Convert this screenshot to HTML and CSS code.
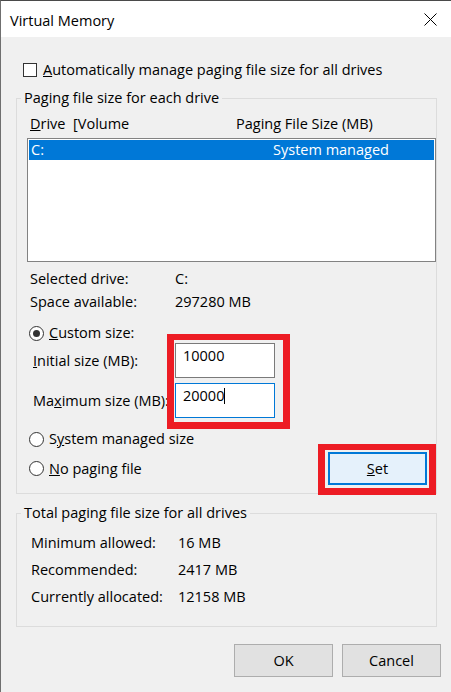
FILE: index.html
```html
<!DOCTYPE html>
<html lang="en">
<head>
  <meta charset="UTF-8" />
  <title>Virtual Memory</title>
  <link rel="stylesheet" href="styles.css">
</head>
<body>
  <div class="janela">
    <div class="titulo">
      <span class="titulo-texto">Virtual Memory</span>
      <svg class="fechar" width="13" height="13" viewBox="0 0 13 13">
        <path d="M0.5 0.5 L12.5 12.5 M12.5 0.5 L0.5 12.5" stroke="#000" stroke-width="1" fill="none" />
      </svg>
    </div>

    <div class="linha-check">
      <span class="checkbox"></span>
      <span><u>A</u>utomatically manage paging file size for all drives</span>
    </div>

    <div class="grupo grupo-drives">
      <div class="legenda">Paging file size for each drive</div>

      <div class="lista-cabecalho">
        <span class="col-drive"><u>D</u>rive&nbsp;&nbsp;[Volume</span>
        <span>Paging File Size (MB)</span>
      </div>

      <div class="lista">
        <div class="lista-linha selecionada">
          <span class="col-drive">C:</span>
          <span>System managed</span>
        </div>
      </div>

      <div class="info">
        <div class="info-linha"><span class="info-rotulo">Selected drive:</span><span>C:</span></div>
        <div class="info-linha"><span class="info-rotulo">Space available:</span><span>297280 MB</span></div>
      </div>

      <div class="linha-radio radio-custom">
        <span class="radio marcado"></span>
        <span><u>C</u>ustom size:</span>
      </div>

      <div class="tamanhos">
        <span class="tamanho-rotulo"><u>I</u>nitial size (MB):</span>
        <div class="campo">10000</div>
        <span class="tamanho-rotulo">Ma<u>x</u>imum size (MB):</span>
        <div class="campo foco">20000<span class="cursor"></span></div>
      </div>

      <div class="linha-radio radio-sistema">
        <span class="radio"></span>
        <span>S<u>y</u>stem managed size</span>
      </div>

      <div class="linha-final">
        <div class="linha-radio">
          <span class="radio"></span>
          <span><u>N</u>o paging file</span>
        </div>
        <button class="botao botao-set"><u>S</u>et</button>
      </div>
    </div>

    <div class="grupo grupo-total">
      <div class="legenda">Total paging file size for all drives</div>
      <div class="total-linha"><span class="total-rotulo">Minimum allowed:</span><span>16 MB</span></div>
      <div class="total-linha"><span class="total-rotulo">Recommended:</span><span>2417 MB</span></div>
      <div class="total-linha"><span class="total-rotulo">Currently allocated:</span><span>12158 MB</span></div>
    </div>

    <div class="acoes">
      <button class="botao">OK</button>
      <button class="botao">Cancel</button>
    </div>

    <div class="destaque destaque-tamanhos"></div>
    <div class="destaque destaque-set"></div>
  </div>
</body>
</html>
```

FILE: styles.css
```css
body {
  margin: 0;
  background: #f0f0f0;
  color: #000;
  font-family: 'Open Sans', sans-serif;
  font-size: 14.5px;
  line-height: 20px;
}

.janela {
  position: relative;
  width: 451px;
  height: 692px;
  box-sizing: border-box;
  border-left: 1px solid #6f6f6f;
  border-top: 1px solid #4a4a4a;
  background: #f0f0f0;
  overflow: hidden;
}

.titulo {
  height: 36px;
  background: #ffffff;
  display: flex;
  justify-content: space-between;
  align-items: flex-start;
}

.titulo-texto {
  padding: 10px 0 0 9px;
}

.fechar {
  margin: 12px 14px 0 0;
}

.linha-check {
  display: flex;
  align-items: center;
  gap: 6px;
  margin-top: 23px;
  padding-left: 22px;
}

.checkbox {
  width: 12px;
  height: 12px;
  border: 1px solid #333;
  background: #fff;
}

.grupo {
  margin-left: 15px;
  width: 421px;
  box-sizing: border-box;
  border: 1px solid #dcdcdc;
}

.grupo-drives {
  margin-top: 18px;
  padding-bottom: 8px;
}

.legenda {
  width: max-content;
  height: 20px;
  margin: -11px 0 0 4px;
  padding: 0 3px;
  background: #f0f0f0;
}

.lista-cabecalho {
  display: flex;
  margin-top: 6px;
  padding-left: 13px;
}

.lista-cabecalho .col-drive {
  width: 206px;
}

.lista {
  margin: 4px 0 0 10px;
  width: 409px;
  height: 124px;
  box-sizing: border-box;
  border: 1px solid #828282;
  background: #fff;
  padding: 1px;
}

.lista-linha {
  display: flex;
  height: 20px;
  padding-left: 2px;
}

.lista-linha .col-drive {
  width: 242px;
}

.selecionada {
  background: #0078d7;
  color: #fff;
}

.info {
  display: flex;
  flex-direction: column;
  gap: 3px;
  margin-top: 7px;
  padding-left: 13px;
}

.info-linha {
  display: flex;
}

.info-rotulo {
  width: 145px;
}

.linha-radio {
  display: flex;
  align-items: center;
  gap: 5px;
  padding-left: 12px;
}

.radio-custom {
  margin-top: 11px;
}

.radio-sistema {
  margin-top: 11px;
}

.radio {
  width: 13px;
  height: 13px;
  border: 1px solid #333;
  border-radius: 50%;
  background: #fff;
  display: flex;
  align-items: center;
  justify-content: center;
}

.radio.marcado::after {
  content: "";
  width: 7px;
  height: 7px;
  border-radius: 50%;
  background: #333;
}

.tamanhos {
  display: grid;
  grid-template-columns: 142px 100px;
  row-gap: 5px;
  align-items: center;
  padding-left: 16px;
}

.campo {
  height: 35px;
  box-sizing: border-box;
  border: 1px solid #7a7a7a;
  background: #fff;
  padding: 2px 7px;
  display: flex;
  align-items: flex-start;
}

.campo.foco {
  border-color: #0078d7;
}

.cursor {
  width: 1px;
  height: 16px;
  margin-top: 2px;
  background: #000;
}

.linha-final {
  display: flex;
  justify-content: space-between;
  align-items: center;
  margin-top: 3px;
}

.linha-final .linha-radio {
  padding-left: 12px;
}

.botao {
  width: 99px;
  height: 33px;
  box-sizing: border-box;
  border: 1px solid #adadad;
  background: #e1e1e1;
  font-family: 'Open Sans', sans-serif;
  font-size: 14.5px;
  color: #000;
  padding: 0;
}

.botao-set {
  margin-right: 9px;
  border: 2px solid #0078d7;
  background: #e5f1fb;
}

.grupo-total {
  margin-top: 19px;
  padding-bottom: 16px;
}

.total-linha {
  display: flex;
  line-height: 27px;
  padding-left: 14px;
}

.legenda + .total-linha {
  margin-top: 6px;
}

.total-rotulo {
  width: 147px;
}

.acoes {
  display: flex;
  justify-content: flex-end;
  gap: 9px;
  margin-top: 17px;
  padding-right: 10px;
}

/* marcações vermelhas por cima da captura */
.destaque {
  position: absolute;
  box-sizing: border-box;
  border: 7px solid #ed1c24;
  border-top-width: 6px;
}

.destaque-tamanhos {
  left: 166px;
  top: 333px;
  width: 123px;
  height: 95px;
}

.destaque-set {
  left: 317px;
  top: 443px;
  width: 118px;
  height: 51px;
}
```
